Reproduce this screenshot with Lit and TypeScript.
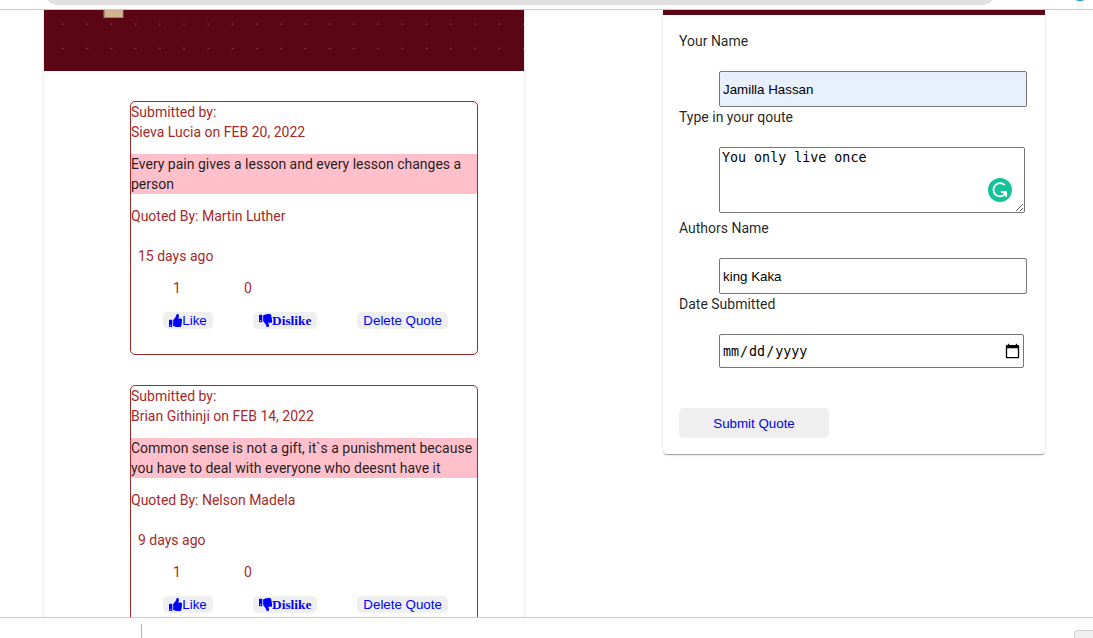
import { LitElement, html, css } from "lit";
import { customElement, property } from "lit/decorators.js";

interface Quote {
  submitter: string;
  date: string;
  text: string;
  author: string;
  age: string;
  likes: number;
  dislikes: number;
}

const quotes: Quote[] = [
  {
    submitter: "Sieva Lucia",
    date: "FEB 20, 2022",
    text: "Every pain gives a lesson and every lesson changes a person",
    author: "Martin Luther",
    age: "15 days ago",
    likes: 1,
    dislikes: 0,
  },
  {
    submitter: "Brian Githinji",
    date: "FEB 14, 2022",
    text: "Common sense is not a gift, it`s a punishment because you have to deal with everyone who deesnt have it",
    author: "Nelson Madela",
    age: "9 days ago",
    likes: 1,
    dislikes: 0,
  },
];

@customElement("quote-card")
export class QuoteCard extends LitElement {
  @property({ attribute: false }) quote!: Quote;

  static styles = css`
    :host {
      display: block;
      border: 1px solid #a52a2a;
      border-radius: 5px;
      color: #a52a2a;
      padding-bottom: 25px;
    }
    p {
      margin: 0;
    }
    .text {
      margin: 12px 0;
      background: #ffc0cb;
      color: rgba(0, 0, 0, 0.87);
    }
    .age {
      padding: 20px 7px 12px;
    }
    .counts {
      display: flex;
      padding-left: 42px;
    }
    .count {
      width: 71px;
    }
    .actions {
      display: flex;
      gap: 40px;
      padding: 14px 29px 0 32px;
    }
    .action {
      display: flex;
      align-items: center;
      border: 0;
      border-radius: 5px;
      padding: 0 6px;
      height: 17px;
      background: #efefef;
      color: #0000ff;
      font-family: "Liberation Sans", Arial, sans-serif;
      white-space: nowrap;
    }
    .serif {
      font-family: "Liberation Serif", "Times New Roman", serif;
      font-weight: bold;
    }
    .thumb {
      display: block;
      width: 1em;
      height: 1em;
      fill: currentColor;
      flex: none;
    }
  `;

  render() {
    const q = this.quote;
    return html`
      <p>Submitted by:</p>
      <p>${q.submitter} on ${q.date}</p>
      <p class="text">${q.text}</p>
      <p>Quoted By: ${q.author}</p>
      <p class="age">${q.age}</p>
      <div class="counts">
        <span class="count">${q.likes}</span>
        <span class="count">${q.dislikes}</span>
      </div>
      <div class="actions">
        <button class="action" type="button">
          <svg class="thumb" viewBox="0 0 512 512" aria-hidden="true">
            <path d="M104 224H24c-13.255 0-24 10.745-24 24v240c0 13.255 10.745 24 24 24h80c13.255 0 24-10.745 24-24V248c0-13.255-10.745-24-24-24zM64 472c-13.255 0-24-10.745-24-24s10.745-24 24-24 24 10.745 24 24-10.745 24-24 24zM384 81.452c0 42.416-25.97 66.208-33.277 94.548h101.723c33.397 0 59.397 27.746 59.553 58.098.084 17.938-7.546 37.249-19.439 49.197l-.11.11c9.836 23.337 8.237 56.037-9.308 79.469 8.681 25.895-.069 57.704-16.382 74.757 4.298 17.598 2.244 32.575-6.148 44.632C440.202 511.587 389.616 512 346.839 512l-2.845-.001c-48.287-.017-87.806-17.598-119.56-31.725-15.957-7.099-36.821-15.887-52.651-16.178-6.54-.12-11.783-5.457-11.783-11.998v-213.77c0-3.2 1.282-6.271 3.558-8.521 39.614-39.144 56.648-80.587 89.117-113.111 14.804-14.832 20.188-37.236 25.393-58.902C282.515 39.293 291.817 0 312 0c24 0 72 8 72 81.452z" />
          </svg>Like
        </button>
        <button class="action serif" type="button">
          <svg class="thumb" viewBox="0 0 512 512" aria-hidden="true">
            <path d="M0 56v240c0 13.255 10.745 24 24 24h80c13.255 0 24-10.745 24-24V56c0-13.255-10.745-24-24-24H24C10.745 32 0 42.745 0 56zm40 200c0-13.255 10.745-24 24-24s24 10.745 24 24-10.745 24-24 24-24-10.745-24-24zm272 256c-20.183 0-29.485-39.293-33.931-57.795-5.206-21.666-10.589-44.07-25.393-58.902-32.469-32.524-49.503-73.967-89.117-113.111a11.98 11.98 0 0 1-3.558-8.521V59.901c0-6.541 5.243-11.878 11.783-11.998 15.831-.29 36.694-9.079 52.651-16.178C256.189 17.598 295.709.017 343.995 0h2.844c42.777 0 93.363.413 113.774 29.737 8.392 12.057 10.446 27.034 6.148 44.632 16.312 17.053 25.063 48.863 16.382 74.757 17.544 23.432 19.143 56.132 9.308 79.469l.11.11c11.893 11.949 19.523 31.259 19.439 49.197-.156 30.352-26.157 58.098-59.553 58.098H350.723C358.03 364.34 384 388.132 384 430.548 384 504 336 512 312 512z" />
          </svg>Dislike
        </button>
        <button class="action" type="button">Delete Quote</button>
      </div>
    `;
  }
}

@customElement("quote-form")
export class QuoteForm extends LitElement {
  static styles = css`
    :host {
      display: block;
      border-top: 5px solid #5c0515;
      border-radius: 0 0 4px 4px;
      padding: 16px;
      background: #fff;
      box-shadow: 0 2px 1px -1px rgba(0, 0, 0, 0.2),
        0 1px 1px 0 rgba(0, 0, 0, 0.14), 0 1px 3px 0 rgba(0, 0, 0, 0.12);
    }
    form {
      display: flex;
      flex-direction: column;
    }
    .field {
      margin: 20px 0 0 40px;
      box-sizing: border-box;
      border: 1px solid #767676;
      border-radius: 2px;
      height: 36px;
      width: 308px;
      max-width: calc(100% - 40px);
      padding: 0 3px;
      background: #fff;
      color: #000;
    }
    .text {
      font-family: "Liberation Sans", Arial, sans-serif;
    }
    .filled {
      background: #e8f0fe;
    }
    .area-wrap {
      position: relative;
      width: 346px;
      max-width: 100%;
      margin-bottom: 5px;
    }
    .area {
      display: block;
      width: calc(100% - 40px);
      height: 66px;
      padding: 2px;
      font-family: "DejaVu Sans Mono", monospace;
    }
    .badge {
      position: absolute;
      right: 13px;
      bottom: 11px;
      width: 24px;
      height: 24px;
    }
    .date {
      height: 34px;
      width: 305px;
      padding: 1px 2px 0;
      font-family: "DejaVu Sans Mono", monospace;
    }
    .date::-webkit-calendar-picker-indicator {
      width: 17px;
      height: 17px;
      padding: 0;
    }
    .submit {
      width: 150px;
      height: 30px;
      margin-top: 40px;
      border: 0;
      border-radius: 5px;
      background: #efefef;
      color: #0000ff;
      font-family: "Liberation Sans", Arial, sans-serif;
    }
  `;

  render() {
    return html`
      <form>
        <label for="name">Your Name</label>
        <input id="name" class="field text filled" type="text" .value=${"Jamilla Hassan"} />
        <label for="quote">Type in your qoute</label>
        <div class="area-wrap">
          <textarea id="quote" class="field area" .value=${"You only live once"}></textarea>
          <svg class="badge" viewBox="0 0 24 24" aria-hidden="true">
            <circle cx="12" cy="12" r="12" fill="#15c39a" />
            <path d="M16.8 7.2A6.6 6.6 0 1 0 17 16.2M12.8 14.2H18" fill="none" stroke="#fff" stroke-width="1.8" />
            <path d="M13.400 13.300H19V18.800H17.300V16.600L15.800 17.600L14.800 16.200L16 15.100H13.400z" fill="#fff" />
          </svg>
        </div>
        <label for="author">Authors Name</label>
        <input id="author" class="field text" type="text" .value=${"king Kaka"} />
        <label for="date">Date Submitted</label>
        <input id="date" class="field date" type="date" />
        <button class="submit" type="button">Submit Quote</button>
      </form>
    `;
  }
}

@customElement("app-root")
export class AppRoot extends LitElement {
  static styles = css`
    :host {
      display: grid;
      grid-template-rows: auto minmax(0, 1fr) auto;
      height: 100vh;
      overflow: hidden;
      background: #fff;
      color: rgba(0, 0, 0, 0.87);
      font: 14px/20px Roboto, sans-serif;
    }
    .toolbar {
      display: flex;
      align-items: flex-end;
      box-sizing: border-box;
      height: 10px;
      overflow: hidden;
      border-bottom: 1px solid #c8c8c8;
      padding: 0 1px 4px 44px;
    }
    .address {
      flex: 1;
      height: 28px;
      border-radius: 14px;
      background: #e0e0e0;
      margin-right: 72px;
    }
    .profile {
      width: 24px;
      height: 24px;
      border-radius: 50%;
      background: #1a8ccc;
      margin-bottom: 4px;
    }
    .page {
      display: grid;
      grid-template-columns: 480fr 382fr;
      gap: 139px;
      align-items: start;
      padding: 0 48px 0 44px;
      overflow: hidden;
    }
    .list {
      box-shadow: 0 2px 1px -1px rgba(0, 0, 0, 0.2),
        0 1px 1px 0 rgba(0, 0, 0, 0.14), 0 1px 3px 0 rgba(0, 0, 0, 0.12);
    }
    .banner {
      display: block;
      width: 100%;
      height: 61px;
      background: #5c0515;
    }
    .quotes {
      display: flex;
      flex-direction: column;
      gap: 30px;
      padding: 30px 46px 30px 86px;
    }
    .dock {
      display: flex;
      justify-content: space-between;
      align-items: flex-end;
      box-sizing: border-box;
      height: 21px;
      overflow: hidden;
      border-top: 1px solid #c8c8c8;
      padding-left: 141px;
    }
    .divider {
      width: 1px;
      height: 14px;
      background: #b4b4b4;
    }
    .tab {
      box-sizing: border-box;
      width: 19px;
      height: 8px;
      border: 1px solid #d0d0d0;
      border-width: 1px 0 0 1px;
      border-radius: 4px 0 0 0;
      background: #efefef;
    }
  `;

  render() {
    return html`
      <div class="toolbar">
        <div class="address"></div>
        <div class="profile"></div>
      </div>
      <main class="page">
        <section class="list">
          <svg class="banner" aria-hidden="true">
            <defs>
              <pattern id="dots" x="6.5" y="2" width="24.25" height="24.25" patternUnits="userSpaceOnUse">
                <rect x="11.5" y="11.5" width="1.6" height="1.2" fill="#92505d" />
              </pattern>
            </defs>
            <rect width="100%" height="100%" fill="url(#dots)" />
            <rect x="59.5" y="-2" width="20" height="10" fill="#a58463" />
            <rect x="61" y="-2" width="17.5" height="9" fill="#cfb491" />
          </svg>
          <div class="quotes">
            ${quotes.map((q) => html`<quote-card .quote=${q}></quote-card>`)}
          </div>
        </section>
        <quote-form></quote-form>
      </main>
      <footer class="dock">
        <div class="divider"></div>
        <div class="tab"></div>
      </footer>
    `;
  }
}
